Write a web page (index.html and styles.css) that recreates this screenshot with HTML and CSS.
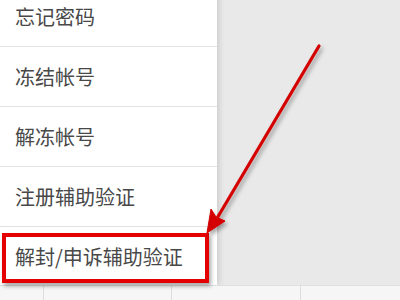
FILE: index.html
```html
<!DOCTYPE html>
<html lang="zh-CN">
<head>
<meta charset="utf-8">
<link rel="stylesheet" href="styles.css">
</head>
<body>
<div class="page">
  <div class="main">
    <ul class="menu">
      <li class="item">忘记密码</li>
      <li class="item">冻结帐号</li>
      <li class="item">解冻帐号</li>
      <li class="item">注册辅助验证</li>
      <li class="item">解封/申诉辅助验证</li>
    </ul>
    <div class="backdrop"></div>
  </div>
  <div class="tabbar">
    <div class="tab"></div>
    <div class="tab"></div>
    <div class="tab"></div>
    <div class="tab"></div>
  </div>
  <div class="highlight"></div>
  <svg class="arrow" width="400" height="300" viewBox="0 0 400 300">
    <defs>
      <filter id="sh" x="-20%" y="-20%" width="140%" height="140%">
        <feDropShadow dx="2" dy="3" stdDeviation="2" flood-color="#000" flood-opacity="0.35"/>
      </filter>
    </defs>
    <g filter="url(#sh)" fill="#d40000" stroke="#d40000">
      <line x1="319" y1="46" x2="216" y2="220" stroke-width="3.2" stroke-linecap="round"/>
      <path d="M207 233 L211 209 L216 217 L225 221 Z" stroke-width="1" stroke-linejoin="round"/>
    </g>
  </svg>
</div>
</body>
</html>
```
FILE: styles.css
```css
html, body {
  margin: 0;
  padding: 0;
}
body {
  width: 400px;
  height: 300px;
  overflow: hidden;
  background: #e9e9e9;
  font-family: "Noto Sans CJK SC", "Noto Sans", sans-serif;
}
.page {
  position: relative;
  width: 400px;
  height: 300px;
  display: flex;
  flex-direction: column;
}
.main {
  flex: 0 0 285px;
  display: flex;
  overflow: hidden;
}
.menu {
  list-style: none;
  margin: -13px 0 0 0;
  padding: 0;
  width: 217px;
  background: #ffffff;
  box-shadow: 2px 0 6px rgba(0, 0, 0, 0.13);
  position: relative;
  z-index: 1;
}
.item {
  height: 59px;
  border-bottom: 1px solid #e2e2e2;
  display: flex;
  align-items: center;
  padding-left: 15px;
  font-size: 20px;
  color: #484848;
  letter-spacing: 0;
}
.backdrop {
  flex: 1;
  background: #e9e9e9;
}
.tabbar {
  flex: 1;
  display: grid;
  grid-template-columns: 44px 128px 129px 1fr;
  background: #f6f6f6;
  border-top: 1px solid #e0e0e0;
}
.tab {
  border-right: 1px solid #dedede;
}
.tab:last-child {
  border-right: none;
}
.highlight {
  position: absolute;
  left: 2px;
  top: 233px;
  width: 199px;
  height: 42px;
  border: 4px solid #e50000;
  box-shadow: 2px 3px 4px rgba(0, 0, 0, 0.35);
  z-index: 2;
}
.arrow {
  position: absolute;
  left: 0;
  top: 0;
  z-index: 3;
}
```
